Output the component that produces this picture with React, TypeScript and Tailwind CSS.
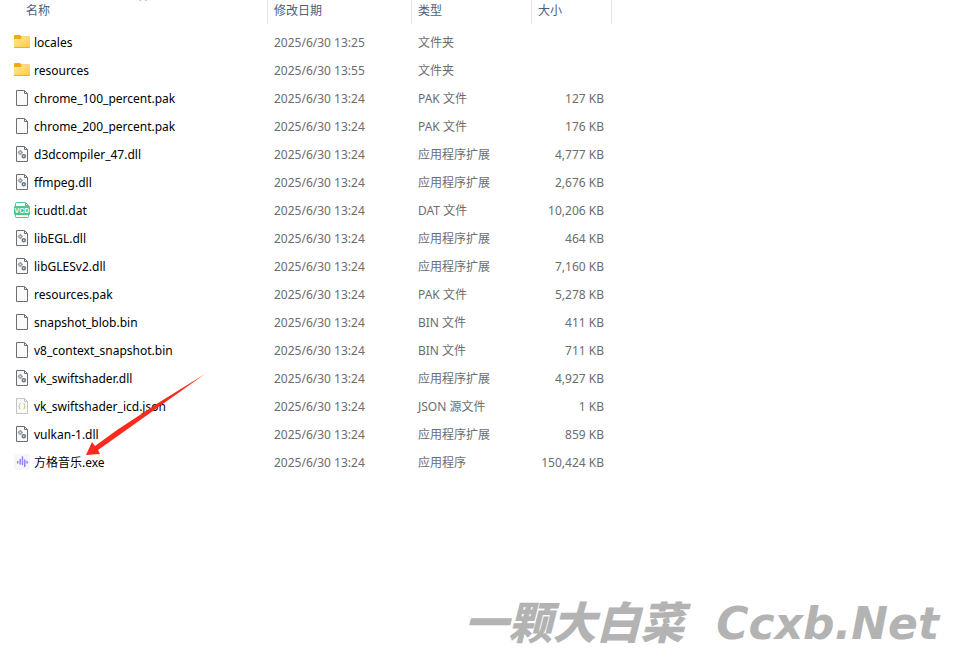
import { ChevronUp } from 'lucide-react';

type Kind = 'folder' | 'file' | 'dll' | 'vcd' | 'json' | 'music';

interface FileRow {
  name: string;
  kind: Kind;
  date: string;
  type: string;
  size?: string;
}

const files: FileRow[] = [
  { name: 'locales', kind: 'folder', date: '2025/6/30 13:25', type: '文件夹' },
  { name: 'resources', kind: 'folder', date: '2025/6/30 13:55', type: '文件夹' },
  { name: 'chrome_100_percent.pak', kind: 'file', date: '2025/6/30 13:24', type: 'PAK 文件', size: '127 KB' },
  { name: 'chrome_200_percent.pak', kind: 'file', date: '2025/6/30 13:24', type: 'PAK 文件', size: '176 KB' },
  { name: 'd3dcompiler_47.dll', kind: 'dll', date: '2025/6/30 13:24', type: '应用程序扩展', size: '4,777 KB' },
  { name: 'ffmpeg.dll', kind: 'dll', date: '2025/6/30 13:24', type: '应用程序扩展', size: '2,676 KB' },
  { name: 'icudtl.dat', kind: 'vcd', date: '2025/6/30 13:24', type: 'DAT 文件', size: '10,206 KB' },
  { name: 'libEGL.dll', kind: 'dll', date: '2025/6/30 13:24', type: '应用程序扩展', size: '464 KB' },
  { name: 'libGLESv2.dll', kind: 'dll', date: '2025/6/30 13:24', type: '应用程序扩展', size: '7,160 KB' },
  { name: 'resources.pak', kind: 'file', date: '2025/6/30 13:24', type: 'PAK 文件', size: '5,278 KB' },
  { name: 'snapshot_blob.bin', kind: 'file', date: '2025/6/30 13:24', type: 'BIN 文件', size: '411 KB' },
  { name: 'v8_context_snapshot.bin', kind: 'file', date: '2025/6/30 13:24', type: 'BIN 文件', size: '711 KB' },
  { name: 'vk_swiftshader.dll', kind: 'dll', date: '2025/6/30 13:24', type: '应用程序扩展', size: '4,927 KB' },
  { name: 'vk_swiftshader_icd.json', kind: 'json', date: '2025/6/30 13:24', type: 'JSON 源文件', size: '1 KB' },
  { name: 'vulkan-1.dll', kind: 'dll', date: '2025/6/30 13:24', type: '应用程序扩展', size: '859 KB' },
  { name: '方格音乐.exe', kind: 'music', date: '2025/6/30 13:24', type: '应用程序', size: '150,424 KB' },
];

function FileIcon({ kind }: { kind: Kind }) {
  const line = kind === 'json' ? '#c4c4c4' : '#6f6f6f';

  if (kind === 'folder') {
    return (
      <svg viewBox="0 0 16 16" className="size-4 shrink-0" aria-hidden="true">
        <defs>
          <linearGradient id="folder" x1="0" y1="0" x2="1" y2="1">
            <stop offset="0" stopColor="#ffe79a" />
            <stop offset="1" stopColor="#ffcb3d" />
          </linearGradient>
        </defs>
        <path d="M0 2q0-1 1-1h5l1.500 1.500H15q1 0 1 1v3H0z" fill="#f2a90c" />
        <path d="M0 5h6.500L8 3h7q1 0 1 1v9q0 1-1 1H1q-1 0-1-1z" fill="url(#folder)" />
        <path d="M0 13h16q0 1-1 1H1q-1 0-1-1z" fill="#eeb02c" />
      </svg>
    );
  }

  if (kind === 'vcd') {
    return (
      <svg viewBox="0 0 16 16" className="size-4 shrink-0" aria-hidden="true">
        <path
          d="M1.500 4.500v-3q0-1 1-1h9l3 3v1M11.500.5v3h3M1.500 12v2.500q0 1 1 1h11q1 0 1-1V12"
          fill="none"
          stroke="#4fc98b"
        />
        <rect y="4" width="16" height="9" rx="1" fill="#4fc98b" />
        <text x="8" y="11" textAnchor="middle" fill="#fff" className="font-['Liberation_Sans',sans-serif] text-[7px] font-bold">
          VCD
        </text>
      </svg>
    );
  }

  if (kind === 'music') {
    return (
      <svg viewBox="0 0 16 16" className="size-4 shrink-0" aria-hidden="true">
        <rect width="16" height="16" rx="3" fill="#f6f5f9" />
        <path
          d="M3.700 7.500v1.500M6.200 5.500v4.500M8.500 3v7.500M10.800 6v6.500M13 7.500v1.500"
          fill="none"
          stroke="#9183f6"
          strokeWidth="1.500"
          strokeLinecap="round"
        />
      </svg>
    );
  }

  return (
    <svg viewBox="0 0 16 16" className="size-4 shrink-0" fill="none" stroke={line} aria-hidden="true">
      <path d="M2.500.5h8l3 3v12h-11z" fill="#fafafa" />
      <path d="M10.500.5v3h3" />
      {kind === 'dll' && (
        <>
          <circle cx="6.300" cy="6.500" r="1.400" stroke="#9aa5ae" strokeWidth="1.600" />
          <path d="M6.300 3.800v1M6.300 8.200v1M3.600 6.500h1M8 6.500h1" stroke="#9aa5ae" />
          <circle cx="9.800" cy="10.300" r="1.500" stroke="#6c7a86" strokeWidth="1.600" />
        </>
      )}
      {kind === 'json' && (
        <path d="M6.500 5.500q-1 0-1 1v1l-.8.7.8.800v1q0 1 1 1M9.500 5.500q1 0 1 1v1l.8.7-.8.800v1q0 1-1 1" stroke="#c9bf6a" />
      )}
    </svg>
  );
}

export default function App() {
  return (
    <main className="relative flex min-h-screen flex-col overflow-hidden bg-white font-['Noto_Sans','Noto_Sans_CJK_SC',sans-serif] text-xs">
      <table className="w-full table-fixed border-separate border-spacing-0">
        <colgroup>
          <col className="w-[268px]" />
          <col className="w-36" />
          <col className="w-[120px]" />
          <col className="w-20" />
          <col />
        </colgroup>
        <thead className="text-left text-[#4c607a]">
          <tr className="h-6">
            <th className="relative border-r border-[#e5e5e5] pb-0.5 pl-[26px] font-normal">
              <button type="button" className="block">名称</button>
              <ChevronUp size={12} strokeWidth={2} className="absolute -top-[7px] left-[137px] text-[#6a6a6a]" />
            </th>
            <th className="border-r border-[#e5e5e5] pb-0.5 pl-1.5 font-normal">
              <button type="button" className="block">修改日期</button>
            </th>
            <th className="border-r border-[#e5e5e5] pb-0.5 pl-1.5 font-normal">
              <button type="button" className="block">类型</button>
            </th>
            <th className="border-r border-[#e5e5e5] pb-0.5 pl-1.5 font-normal">
              <button type="button" className="block">大小</button>
            </th>
            <td />
          </tr>
        </thead>
        <tbody className="text-[#6d6d6d]">
          <tr className="h-1" aria-hidden="true">
            <td colSpan={5} />
          </tr>
          {files.map((file) => (
            <tr key={file.name} className="h-7">
              <td className="pl-3.5 text-black">
                <div className="flex items-center gap-1">
                  <FileIcon kind={file.kind} />
                  <span className="pt-0.5">{file.name}</span>
                </div>
              </td>
              <td className="pt-0.5 pl-1.5">{file.date}</td>
              <td className="pt-0.5 pl-1.5">{file.type}</td>
              <td className="pt-0.5 pr-2 text-right whitespace-nowrap">{file.size}</td>
              <td />
            </tr>
          ))}
        </tbody>
      </table>

      <svg
        viewBox="0 0 120 82"
        className="absolute top-[374px] left-[86px] w-[120px]"
        fill="#fb2a1c"
        aria-hidden="true"
      >
        <path d="M119 0Q74 27 31 56L9 72 6 68 0 81l14-1-2-4 24-17Q78 29 119 0z" />
      </svg>

      <p className="mt-auto flex items-baseline gap-8 self-end pr-[18px] pb-2 text-[44px] leading-[56px] font-black whitespace-nowrap text-[#b3b3b3] italic">
        <span>一颗大白菜</span>
        <span className="font-['DejaVu_Sans',sans-serif]">Ccxb.Net</span>
      </p>
    </main>
  );
}
